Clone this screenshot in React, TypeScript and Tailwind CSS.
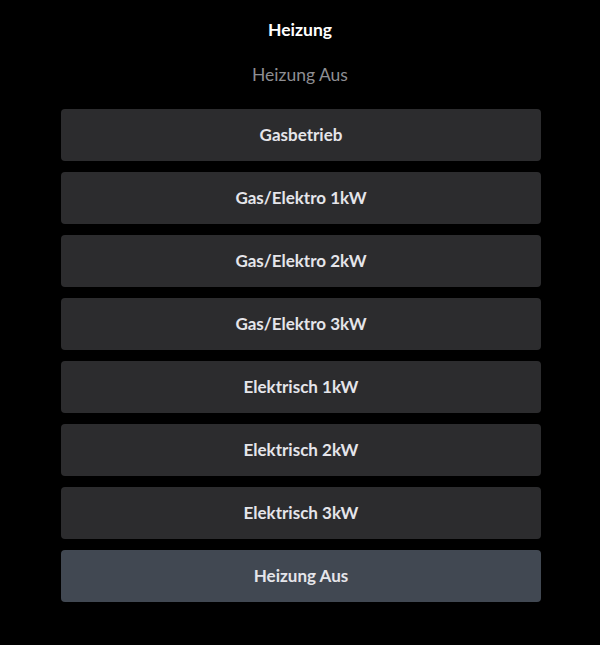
const options = [
  "Gasbetrieb",
  "Gas/Elektro 1kW",
  "Gas/Elektro 2kW",
  "Gas/Elektro 3kW",
  "Elektrisch 1kW",
  "Elektrisch 2kW",
  "Elektrisch 3kW",
  "Heizung Aus",
];

export default function App() {
  const selected = "Heizung Aus";
  return (
    <div className="min-h-[645px] w-[600px] bg-black font-['Lato',sans-serif]">
      <div className="flex flex-col items-center pt-[18px]">
        <h1 className="text-[17.5px] leading-[24px] font-bold text-white">Heizung</h1>
        <p className="mt-[21px] text-[17.5px] leading-[24px] text-[#8e8e93]">{selected}</p>
      </div>
      <div className="ml-[61px] mt-[22px] flex w-[480px] flex-col gap-[11px]">
        {options.map((o) => (
          <button
            key={o}
            className={`h-[52px] w-full rounded-[4px] text-[17px] font-bold text-[#e5e5ea] ${
              o === selected ? "bg-[#414852]" : "bg-[#2c2c2e]"
            }`}
          >
            {o}
          </button>
        ))}
      </div>
    </div>
  );
}
